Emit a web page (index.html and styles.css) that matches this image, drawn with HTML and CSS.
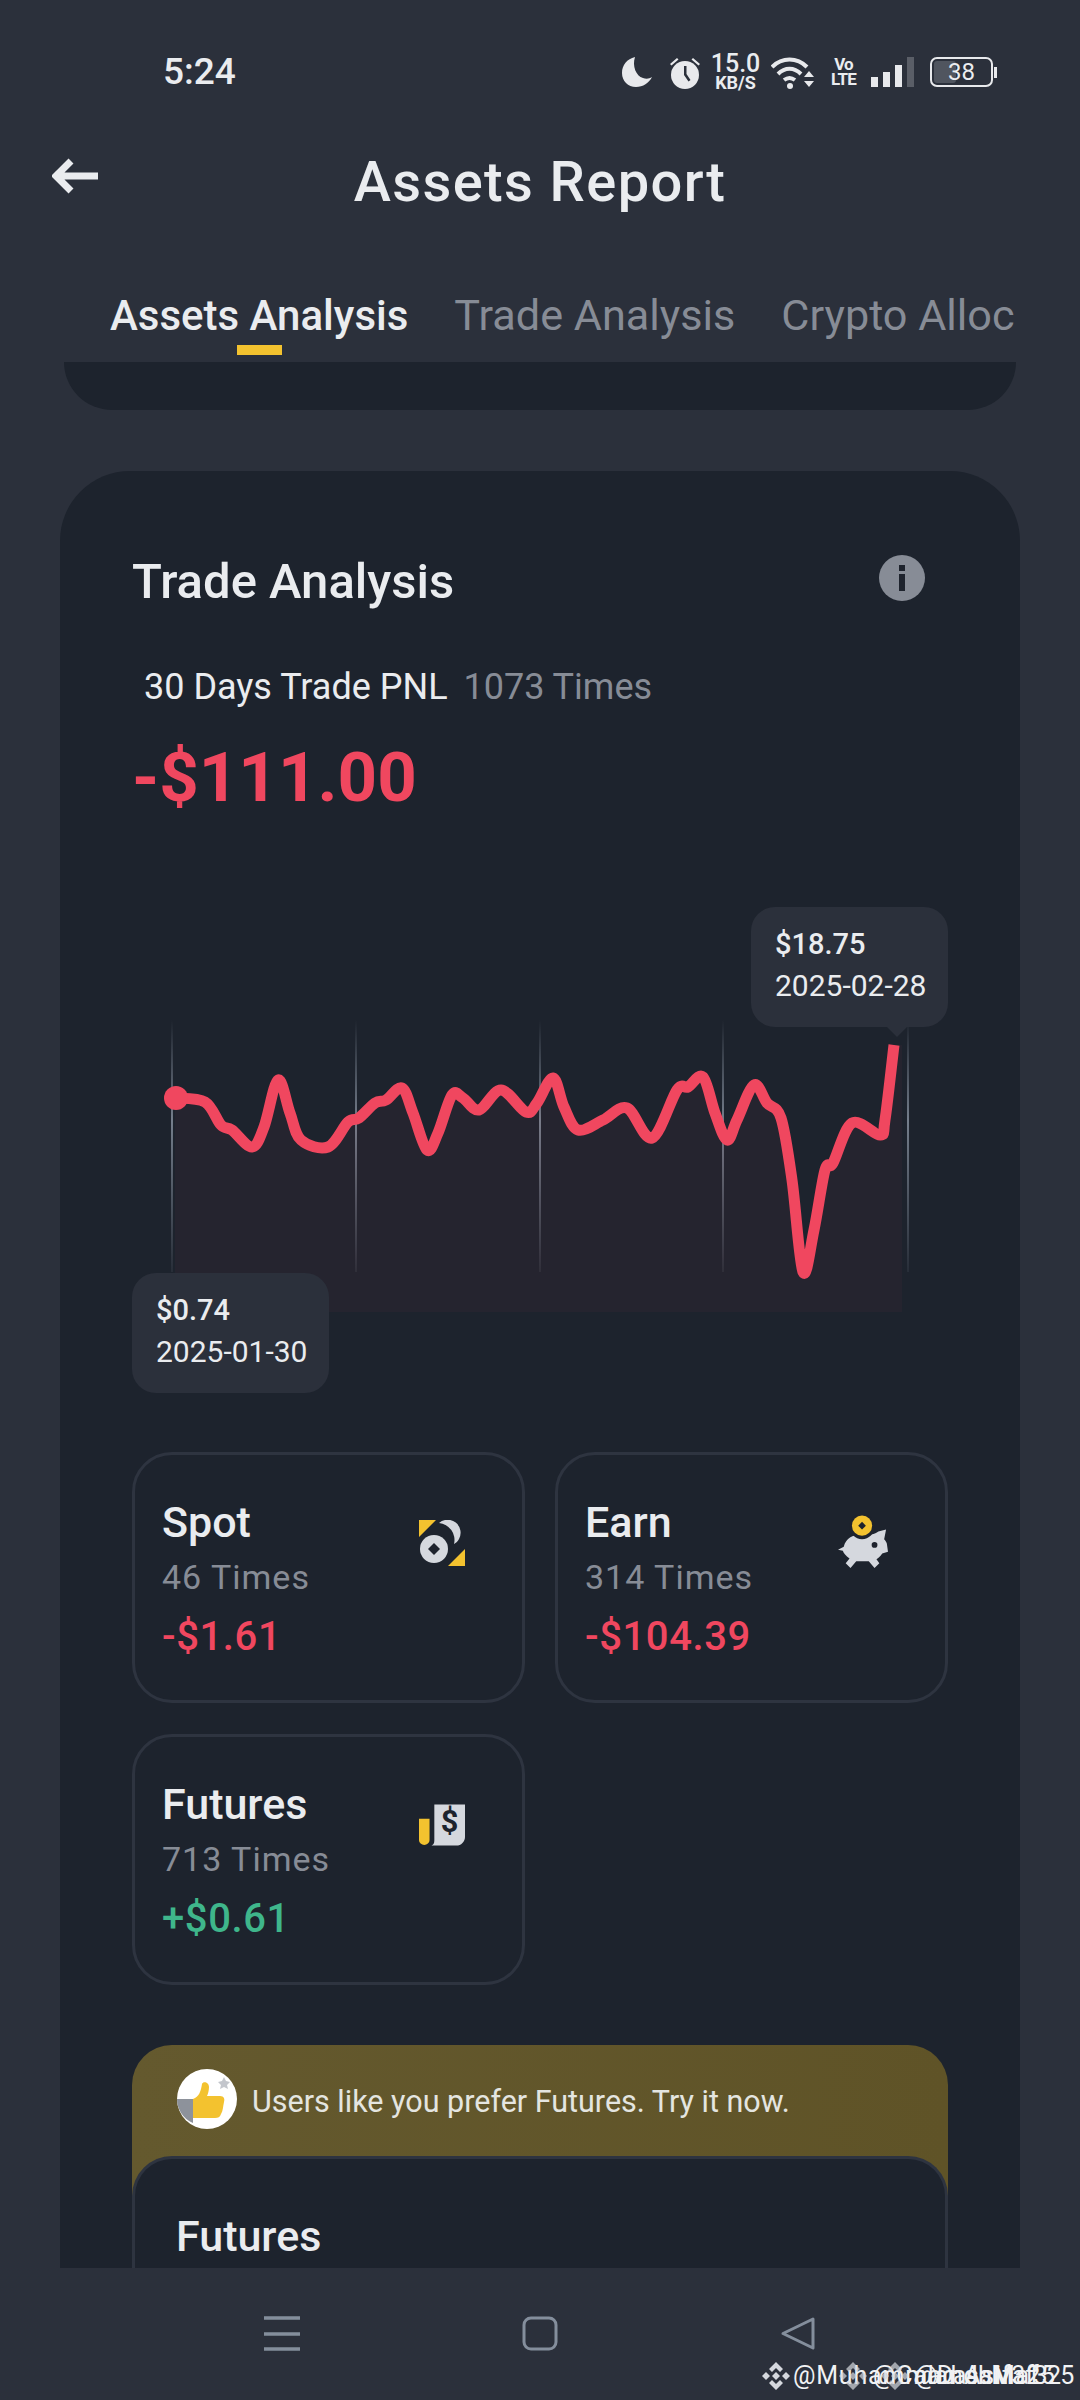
FILE: index.html
```html
<!DOCTYPE html>
<html lang="en">
<head>
  <meta charset="UTF-8" />
  <meta name="viewport" content="width=device-width, initial-scale=1.0" />
  <title>Assets Report</title>
  <link rel="stylesheet" href="styles.css">
</head>
<body>
  <div class="status-bar">
    <span class="time">5:24</span>
    <div class="status-icons">
      <svg class="ic-moon" viewBox="0 0 30 30"><path d="M13 0C5 2 0 8 0 16c0 8 6 14 14 14 7 0 13-4 16-10-3 2-6 2-9 1C14 19 10 9 13 0z"/></svg>
      <svg class="ic-alarm" viewBox="0 0 32 33"><path d="M1 8l7-6 1.500 1.500-7 6zM31 8l-7-6-1.500 1.500 7 6z"/><circle cx="16" cy="19" r="14"/><path d="M15 10h2.500v8l4 6-2 1.500-4.500-6.500z" fill="#2b303b"/></svg>
      <div class="speed"><b>15.0</b><span>KB/S</span></div>
      <svg class="ic-wifi" viewBox="0 0 43 33">
        <path d="M1 11C11 1 26 1 36 11" fill="none" stroke="#e8e9ec" stroke-width="4"/>
        <path d="M7 18c7-7 16-7 23 0" fill="none" stroke="#e8e9ec" stroke-width="4"/>
        <path d="M13 24c4-3 7-3 11 0" fill="none" stroke="#e8e9ec" stroke-width="4"/>
        <circle cx="19" cy="30" r="3"/>
        <path d="M33 21l5-6 5 6zM33 25l5 6 5-6z"/>
      </svg>
      <div class="volte"><span>Vo</span><span>LTE</span></div>
      <svg class="ic-signal" viewBox="0 0 43 30">
        <rect x="0" y="20" width="7" height="10"/>
        <rect x="12" y="15" width="7" height="15"/>
        <rect x="24" y="8" width="7" height="22"/>
        <rect x="36" y="0" width="7" height="30" opacity=".25"/>
      </svg>
      <div class="battery"><span class="battery-level"></span><span class="battery-num">38</span></div>
      <span class="battery-tip"></span>
    </div>
  </div>

  <header class="header">
    <svg class="back" viewBox="0 0 46 36"><path d="M19 3L4 18l15 15M5 18h41" fill="none" stroke="#eaecef" stroke-width="7"/></svg>
    <h1>Assets Report</h1>
  </header>

  <nav class="tabs">
    <div class="tab active">Assets Analysis<i></i></div>
    <div class="tab">Trade Analysis</div>
    <div class="tab">Crypto Alloc</div>
  </nav>

  <main class="content">
    <div class="prev-card"></div>

    <section class="card">
      <div class="card-head">
        <h2>Trade Analysis</h2>
        <svg class="info" viewBox="0 0 46 46"><circle cx="23" cy="23" r="23" fill="#878c96"/><rect x="20" y="19" width="6" height="17" fill="#1e232d"/><rect x="20" y="10" width="6" height="6" fill="#1e232d"/></svg>
      </div>
      <div class="pnl-label">30 Days Trade PNL <span>1073 Times</span></div>
      <div class="pnl-value">-$111.00</div>

      <div class="chart">
        <svg viewBox="0 0 816 486" width="816" height="486">
          <defs>
            <linearGradient id="gridFade" x1="0" y1="0" x2="0" y2="1">
              <stop offset="0" stop-color="#848e9c" stop-opacity="0"/>
              <stop offset=".4" stop-color="#848e9c" stop-opacity=".85"/>
              <stop offset="1" stop-color="#848e9c" stop-opacity=".1"/>
            </linearGradient>
          </defs>
          <g fill="url(#gridFade)">
            <rect x="39" y="113" width="2" height="252"/>
            <rect x="223" y="113" width="2" height="252"/>
            <rect x="407" y="113" width="2" height="252"/>
            <rect x="590" y="113" width="2" height="252"/>
            <rect x="775" y="113" width="2" height="252"/>
          </g>
          <path id="area" fill="#f6465d" fill-opacity=".04"/>
          <path id="line" fill="none" stroke="#f0475f" stroke-width="11" stroke-linejoin="round"/>
          <circle cx="44" cy="191" r="12" fill="#f0475f"/>
        </svg>
        <div class="tip tip-end"><b>$18.75</b><span>2025-02-28</span></div>
        <div class="tip tip-start"><b>$0.74</b><span>2025-01-30</span></div>
      </div>

      <div class="stats">
        <div class="stat">
          <div>
            <div class="stat-name">Spot</div>
            <div class="stat-times">46 Times</div>
            <div class="stat-val down">-$1.61</div>
          </div>
          <svg class="stat-icon" viewBox="0 0 46 46">
            <path d="M0 0h17L0 17zM46 46H29l17-17z" fill="#f3c22f"/>
            <path d="M20 3a13 13 0 0 1 20 16c-1 2-3 4-5 5a17 17 0 0 0-15-21z" fill="#d5d8de"/>
            <circle cx="15" cy="29" r="14" fill="#d5d8de"/>
            <path d="M15 23l6 6-6 6-6-6z" fill="#1e232d"/>
          </svg>
        </div>
        <div class="stat">
          <div>
            <div class="stat-name">Earn</div>
            <div class="stat-times">314 Times</div>
            <div class="stat-val down">-$104.39</div>
          </div>
          <svg class="stat-icon pig" viewBox="0 0 52 58">
            <path d="M0 36l6-3c2-9 10-13 19-13 7 0 12 1 17-3l8-2-2 10c2 2 3 4 3 6l1 7-6 2c-2 3-4 5-6 6l3 4-5 5-6-7H19l-6 7-5-5 4-5c-4-3-6-5-7-8z" fill="#d5d8de"/>
            <circle cx="38" cy="31" r="3" fill="#1e232d"/>
            <circle cx="25" cy="12" r="13" fill="#1e232d"/>
            <circle cx="25" cy="11" r="10.500" fill="#f3c22f"/>
            <path d="M25 7l4 4-4 4-4-4z" fill="#1e232d"/>
          </svg>
        </div>
        <div class="stat">
          <div>
            <div class="stat-name">Futures</div>
            <div class="stat-times">713 Times</div>
            <div class="stat-val up">+$0.61</div>
          </div>
          <svg class="stat-icon" viewBox="0 0 48 43">
            <path d="M0 15h11v22c0 7-11 7-11 0z" fill="#f3c22f"/>
            <path d="M16 0h32v34c0 5-4 9-9 9H13c3-1 3-4 3-6z" fill="#d5d8de"/>
            <text x="32" y="29" text-anchor="middle" class="doc-sign">$</text>
          </svg>
        </div>
      </div>

      <div class="promo">
        <div class="promo-head">
          <svg class="thumb" viewBox="0 0 60 60">
            <circle cx="30" cy="30" r="30" fill="#fff"/>
            <path d="M0 30h16v24C6 50 0 40 0 30z" fill="#8d929b"/>
            <path d="M16 30c6-2 8-8 9-15 1-3 7-2 7 3 0 3-1 7-2 9h13c4 0 5 3 4 6-1 4-1 9-3 12-1 3-3 4-6 4H16z" fill="#f3c22f"/>
            <path d="M47 8l2 4 4 1-3 3 1 4-4-2-4 2 1-4-3-3 4-1z" fill="#c3c6cc"/>
          </svg>
          <span>Users like you prefer Futures. Try it now.</span>
        </div>
        <div class="promo-body">
          <h3>Futures</h3>
        </div>
      </div>
    </section>
  </main>

  <footer class="nav-bar">
    <svg viewBox="0 0 36 35"><path d="M0 2h36M0 18h36M0 33h36" stroke="#848e9c" stroke-width="3.500"/></svg>
    <svg viewBox="0 0 36 35"><rect x="2" y="2" width="32" height="31" rx="7" fill="none" stroke="#848e9c" stroke-width="3"/></svg>
    <svg viewBox="0 0 36 35"><path d="M33 3L3 17.500 33 32z" fill="none" stroke="#848e9c" stroke-width="3" stroke-linejoin="round"/></svg>
  </footer>

  <div class="watermark">
    <svg class="wm-logo wm-1" viewBox="0 0 28 28"><path d="M14 0l7 7-3 3-4-4-4 4-3-3zM4 10l4 4-4 4-4-4zM24 10l4 4-4 4-4-4zM14 10l4 4-4 4-4-4zM14 28l-7-7 3-3 4 4 4-4 3 3z"/></svg>
    <span class="wm-text wm-a">@Muhammad Asif325</span>
    <svg class="wm-logo wm-2" viewBox="0 0 28 28"><path d="M14 0l7 7-3 3-4-4-4 4-3-3zM4 10l4 4-4 4-4-4zM24 10l4 4-4 4-4-4zM14 10l4 4-4 4-4-4zM14 28l-7-7 3-3 4 4 4-4 3 3z"/></svg>
    <span class="wm-text wm-b">@CalandaMaf</span>
    <svg class="wm-logo wm-3" viewBox="0 0 28 28"><path d="M14 0l7 7-3 3-4-4-4 4-3-3zM4 10l4 4-4 4-4-4zM24 10l4 4-4 4-4-4zM14 10l4 4-4 4-4-4zM14 28l-7-7 3-3 4 4 4-4 3 3z"/></svg>
    <span class="wm-text wm-c">@DashMaf325</span>
  </div>

  <script src="chart.js"></script>
</body>
</html>
```

FILE: styles.css
```css
* {
  box-sizing: border-box;
  margin: 0;
  padding: 0;
}

body {
  width: 1080px;
  height: 2400px;
  overflow: hidden;
  position: relative;
  display: flex;
  flex-direction: column;
  background: #2b303b;
  color: #eaecef;
  font-family: Roboto, "Noto Sans", sans-serif;
}

/* status bar */
.status-bar {
  height: 130px;
  display: flex;
  justify-content: space-between;
  padding: 54px 83px 0 163px;
  align-items: flex-start;
}

.time {
  font-size: 37px;
  line-height: 36px;
  font-weight: 500;
}

.status-icons {
  display: flex;
  align-items: center;
  height: 36px;
  fill: #e8e9ec;
}

.ic-moon { width: 30px; height: 30px; }
.ic-alarm { width: 32px; height: 33px; margin-left: 17px; }

.speed {
  width: 47px;
  margin-left: 11px;
  display: flex;
  flex-direction: column;
  align-items: center;
  line-height: 1;
}
.speed b { font-size: 25px; font-weight: 500; line-height: 20px; }
.speed span { font-size: 18px; font-weight: 700; line-height: 17px; }

.ic-wifi { width: 43px; height: 33px; margin-left: 12px; }

.volte {
  width: 23px;
  margin-left: 18px;
  display: flex;
  flex-direction: column;
  align-items: center;
  font-size: 17px;
  line-height: 15px;
  font-weight: 700;
  letter-spacing: -.8px;
}

.ic-signal { width: 43px; height: 30px; margin-left: 16px; }

.battery {
  width: 63px;
  height: 30px;
  margin-left: 16px;
  border: 2px solid #e8e9ec;
  border-radius: 7px;
  position: relative;
  display: flex;
  align-items: center;
  justify-content: center;
  font-size: 24px;
}
.battery-level {
  position: absolute;
  left: 2px;
  top: 2px;
  bottom: 2px;
  width: 38%;
  background: #50555f;
  border-radius: 3px;
}
.battery-num { position: relative; }
.battery-tip {
  width: 3px;
  height: 11px;
  background: #e8e9ec;
  margin-left: 1px;
}

/* header */
.header {
  height: 104px;
  position: relative;
  display: flex;
  align-items: center;
  justify-content: center;
}

.back {
  position: absolute;
  left: 52px;
  top: 28px;
  width: 46px;
  height: 36px;
}

.header h1 {
  font-size: 56px;
  font-weight: 500;
  letter-spacing: 1.4px;
}

/* tabs */
.tabs {
  margin: 48px 64px 0 110px;
  height: 80px;
  display: flex;
  gap: 46px;
  overflow: hidden;
  white-space: nowrap;
  font-size: 43.200px;
  line-height: 50px;
  color: #878c96;
  padding-top: 9px;
}

.tab {
  display: flex;
  flex-direction: column;
  align-items: center;
  flex-shrink: 0;
}

.tab.active {
  color: #eaecef;
  font-size: 42px;
  font-weight: 500;
}

.tab i {
  display: block;
  width: 45px;
  height: 10px;
  margin-top: 4px;
  background: #f3c22f;
}

/* page content */
.content {
  flex: 1;
  min-height: 0;
  overflow: hidden;
}

.prev-card {
  height: 48px;
  margin: 0 64px;
  background: #1d232d;
  border-radius: 0 0 50px 50px;
}

.card {
  margin: 61px 60px 0;
  padding: 80px 72px 0;
  background: #1d232d;
  border-radius: 70px 70px 0 0;
}

.card-head {
  height: 60px;
  display: flex;
  justify-content: space-between;
  align-items: center;
}

.card-head h2 {
  font-size: 49px;
  font-weight: 500;
}

.info {
  width: 46px;
  height: 46px;
  margin-right: 23px;
  margin-top: -6px;
}

.pnl-label {
  margin-top: 51px;
  padding-left: 12px;
  font-size: 36px;
  line-height: 50px;
}

.pnl-label span {
  color: #878c96;
  margin-left: 7px;
}

.pnl-value {
  margin-top: 26px;
  font-size: 69px;
  line-height: 80px;
  font-weight: 700;
  color: #f0475f;
}

/* chart */
.chart {
  position: relative;
  width: 816px;
  height: 486px;
  margin-top: 89px;
}

.chart svg { display: block; }

.tip {
  position: absolute;
  width: 197px;
  height: 120px;
  padding: 16px 0 16px 24px;
  background: #2b303b;
  border-radius: 24px;
  display: flex;
  flex-direction: column;
  font-size: 30px;
  line-height: 42px;
  white-space: nowrap;
}

.tip b { font-weight: 500; font-size: 29px; }

.tip-end { right: 0; top: 0; }

.tip-end::after {
  content: "";
  position: absolute;
  left: 136px;
  bottom: -10px;
  border-left: 10px solid transparent;
  border-right: 10px solid transparent;
  border-top: 10px solid #2b303b;
}

.tip-start { left: 0; bottom: 0; }

/* stat cards */
.stats {
  margin-top: 59px;
  display: grid;
  grid-template-columns: repeat(2, 393px);
  grid-auto-rows: 251px;
  gap: 31px 30px;
}

.stat {
  display: flex;
  justify-content: space-between;
  align-items: flex-start;
  padding: 40px 57px 0 27px;
  border: 3px solid #2e3440;
  border-radius: 40px;
}

.stat-name {
  font-size: 43px;
  line-height: 54px;
  font-weight: 500;
}

.stat-times {
  font-size: 34px;
  line-height: 56px;
  color: #878c96;
  letter-spacing: 1px;
}

.stat-val {
  font-size: 40px;
  line-height: 64px;
  font-weight: 500;
  letter-spacing: .6px;
}

.down { color: #f0475f; }
.up { color: #3fb68b; }

.stat-icon {
  width: 46px;
  height: 46px;
  margin-top: 25px;
}

.stat-icon.pig {
  width: 50px;
  height: 56px;
  margin-top: 20px;
}

.doc-sign {
  font-family: Roboto, sans-serif;
  font-size: 32px;
  font-weight: 700;
  fill: #1d232d;
}

/* promo block, cut off by the nav bar */
.promo {
  margin-top: 60px;
  height: 260px;
  background: linear-gradient(90deg, #64592e, #5f5327);
  border-radius: 40px 40px 0 0;
}

.promo-head {
  height: 111px;
  padding: 24px 0 0 45px;
  display: flex;
  align-items: flex-start;
  gap: 15px;
  font-size: 30.500px;
  line-height: 66px;
  color: #e4e5e0;
}

.thumb {
  width: 60px;
  height: 60px;
}

.promo-body {
  height: 149px;
  background: #1d232d;
  border: 3px solid #2e3440;
  border-bottom: 0;
  border-radius: 40px 40px 0 0;
  padding: 50px 0 0 41px;
}

.promo-body h3 {
  font-size: 43px;
  line-height: 54px;
  font-weight: 500;
}

/* bottom nav */
.nav-bar {
  height: 132px;
  padding-top: 48px;
  display: flex;
  justify-content: center;
  align-items: flex-start;
  gap: 222px;
  background: #2b303b;
}

.nav-bar svg {
  width: 36px;
  height: 35px;
}

/* watermark lies over the nav bar */
.watermark {
  position: absolute;
  left: 0;
  top: 0;
  width: 100%;
  height: 100%;
  pointer-events: none;
}

.wm-logo {
  position: absolute;
  top: 2362px;
  width: 28px;
  height: 28px;
  fill: #d5d8de;
}
.wm-1 { left: 762px; }
.wm-2 { left: 839px; opacity: .7; }
.wm-3 { left: 881px; opacity: .7; }

.wm-text {
  position: absolute;
  top: 2360px;
  font-size: 25px;
  line-height: 32px;
  letter-spacing: .8px;
  color: #f1f2f4;
  white-space: nowrap;
}
.wm-a { left: 793px; }
.wm-b { left: 873px; }
.wm-c { left: 915px; letter-spacing: -.6px; }
```

FILE: chart.js
```js
document.addEventListener("DOMContentLoaded", function () {
  const points = [
    [43,191],[73,195],[89,218],[100,223],[120,240],[132,220],[146,173],[158,206],
    [169,233],[196,240],[216,215],[227,211],[243,196],[254,193],[270,181],[281,206],
    [295,243],[306,226],[320,188],[331,191],[347,203],[369,183],[394,205],[405,196],
    [421,171],[432,200],[446,223],[471,213],[495,201],[520,231],[545,183],[556,180],
    [571,170],[583,206],[595,233],[605,213],[622,178],[635,196],[649,211],[660,273],
    [671,365],[682,323],[693,263],[701,256],[720,216],[748,228],[753,213],[762,138]
  ];

  // catmull-rom to bezier
  let d = `M${points[0][0]} ${points[0][1]}`;
  for (let i = 0; i < points.length - 1; i++) {
    const p0 = points[i - 1] || points[i];
    const p1 = points[i];
    const p2 = points[i + 1];
    const p3 = points[i + 2] || p2;
    const c1x = p1[0] + (p2[0] - p0[0]) / 6;
    const c1y = p1[1] + (p2[1] - p0[1]) / 6;
    const c2x = p2[0] - (p3[0] - p1[0]) / 6;
    const c2y = p2[1] - (p3[1] - p1[1]) / 6;
    d += ` C${c1x} ${c1y} ${c2x} ${c2y} ${p2[0]} ${p2[1]}`;
  }

  document.getElementById("line").setAttribute("d", d);
  document.getElementById("area").setAttribute("d", `${d} L770 138 L770 405 L43 405 Z`);
});
```
